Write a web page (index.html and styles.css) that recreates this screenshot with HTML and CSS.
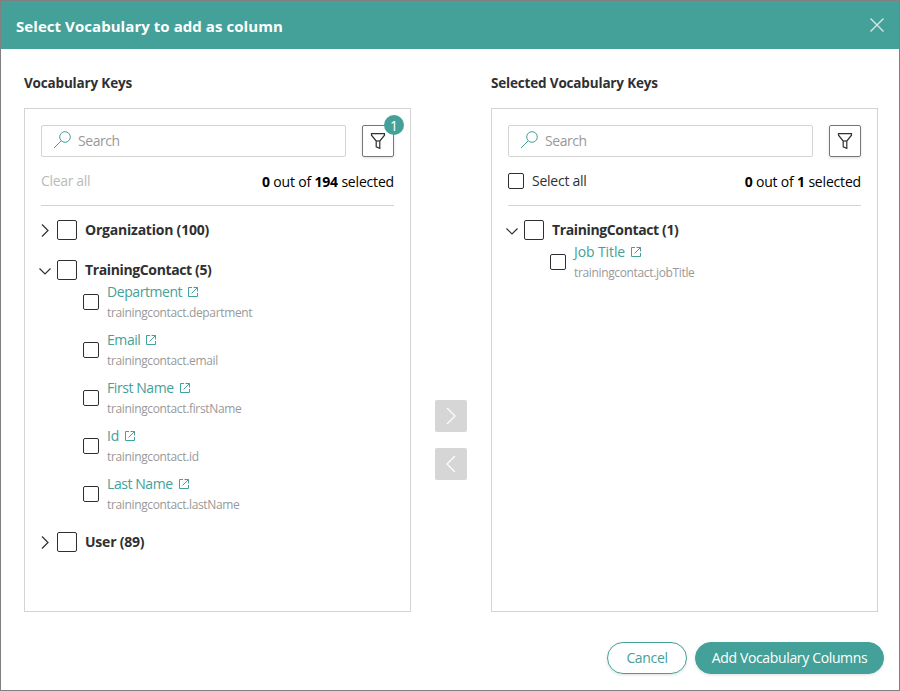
FILE: index.html
```html
<!DOCTYPE html>
<html lang="en">
<head>
<meta charset="utf-8">
<title>Select Vocabulary</title>
<link rel="stylesheet" href="styles.css">
</head>
<body>
<svg class="defs" width="0" height="0">
  <symbol id="search" viewBox="0 0 18 18"><circle cx="12" cy="6" r="5.3"/><path d="M8.200 9.800 1 17"/></symbol>
  <symbol id="filter" viewBox="0 0 16 18"><path d="M1.5 1.7h13v1.500L9.800 9v7.300l-3.600-1.500V9L1.500 3.200z"/><path d="M6.200 9h3.600"/></symbol>
  <symbol id="right" viewBox="0 0 8 14"><path d="M1 1.500l6 6-6 6"/></symbol>
  <symbol id="down" viewBox="0 0 14 8"><path d="M1.500 1.500l5.500 5.500 5.500-5.500"/></symbol>
  <symbol id="open" viewBox="0 0 12 12"><path d="M5 1.500H1.500v9h9V7M6.500 1.500h4v4M10.500 1.500 4.500 7.500"/></symbol>
</svg>
<div class="dialog">
  <header class="header">
    <h1 class="title">Select Vocabulary to add as column</h1>
    <svg class="close" viewBox="0 0 14 14"><path d="M.5.5l13 13M13.500.5l-13 13"/></svg>
  </header>
  <main class="content">
    <section class="side">
      <h2 class="side-title">Vocabulary Keys</h2>
      <div class="panel">
        <div class="tools">
          <div class="search"><svg class="search-icon"><use href="#search"/></svg><span>Search</span></div>
          <div class="filter"><svg class="filter-icon"><use href="#filter"/></svg><span class="badge">1</span></div>
        </div>
        <div class="summary"><span class="clear">Clear all</span><span class="count"><b>0</b> out of <b>194</b> selected</span></div>
        <div class="tree">
          <div class="group"><svg class="chev"><use href="#right"/></svg><i class="box large"></i><b>Organization (100)</b></div>
          <div class="group open-group"><svg class="chev wide"><use href="#down"/></svg><i class="box large"></i><b>TrainingContact (5)</b></div>
          <div class="items">
            <div class="item"><i class="box"></i><div><a class="name">Department<svg class="open"><use href="#open"/></svg></a><span class="key">trainingcontact.department</span></div></div>
            <div class="item"><i class="box"></i><div><a class="name">Email<svg class="open"><use href="#open"/></svg></a><span class="key">trainingcontact.email</span></div></div>
            <div class="item"><i class="box"></i><div><a class="name">First Name<svg class="open"><use href="#open"/></svg></a><span class="key">trainingcontact.firstName</span></div></div>
            <div class="item"><i class="box"></i><div><a class="name short">Id<svg class="open"><use href="#open"/></svg></a><span class="key">trainingcontact.id</span></div></div>
            <div class="item"><i class="box"></i><div><a class="name">Last Name<svg class="open"><use href="#open"/></svg></a><span class="key">trainingcontact.lastName</span></div></div>
          </div>
          <div class="group"><svg class="chev"><use href="#right"/></svg><i class="box large"></i><b>User (89)</b></div>
        </div>
      </div>
    </section>
    <div class="moves">
      <div class="move"><svg class="arrow" viewBox="0 0 10 18"><path d="M1 1l8 8-8 8"/></svg></div>
      <div class="move"><svg class="arrow" viewBox="0 0 10 18"><path d="M9 1 1 9l8 8"/></svg></div>
    </div>
    <section class="side">
      <h2 class="side-title">Selected Vocabulary Keys</h2>
      <div class="panel">
        <div class="tools">
          <div class="search"><svg class="search-icon"><use href="#search"/></svg><span>Search</span></div>
          <div class="filter"><svg class="filter-icon"><use href="#filter"/></svg></div>
        </div>
        <div class="summary"><span class="all"><i class="box"></i>Select all</span><span class="count"><b>0</b> out of <b>1</b> selected</span></div>
        <div class="tree">
          <div class="group open-group"><svg class="chev wide"><use href="#down"/></svg><i class="box large"></i><b>TrainingContact (1)</b></div>
          <div class="items">
            <div class="item"><i class="box"></i><div><a class="name short">Job Title<svg class="open"><use href="#open"/></svg></a><span class="key">trainingcontact.jobTitle</span></div></div>
          </div>
        </div>
      </div>
    </section>
  </main>
  <footer class="footer">
    <div class="button">Cancel</div>
    <div class="button primary">Add Vocabulary Columns</div>
  </footer>
</div>
</body>
</html>
```
FILE: styles.css
```css
* { box-sizing: border-box; }
body { margin: 0; font: 14px/20px "Open Sans", "Noto Sans", sans-serif; color: #2f3032; }
svg { display: block; fill: none; stroke: currentColor; flex: none; }
.defs { position: absolute; }
.dialog { width: 900px; height: 691px; border: 1px solid #808080; background: #fff; white-space: nowrap; display: flex; flex-direction: column; }
.header { height: 48px; flex: none; background: #44a199; color: #fff; display: flex; align-items: center; justify-content: space-between; padding: 2px 15px 0; }
.title { margin: 0; font-size: 15px; font-weight: 700; letter-spacing: .06px; }
.close { width: 14px; height: 14px; margin-bottom: 2px; stroke: #d3e9e7; stroke-width: 1.4; }
.content { display: flex; padding: 24px 21px 0 23px; height: 563px; }
.side { width: 387px; }
.side-title { margin: 0 0 15px; font-size: 13.5px; font-weight: 700; letter-spacing: -.17px; }
.panel { height: 504px; border: 1px solid #d3d3d3; padding: 16px; }
.tools { display: flex; gap: 16px; }
.search { flex: 1; height: 32px; border: 1px solid #d3d3d3; border-radius: 2px; display: flex; align-items: center; padding-left: 11px; gap: 7px; color: #999; letter-spacing: -.45px; }
.search-icon { width: 18px; height: 18px; color: #44a199; margin-top: -2px; }
.filter { position: relative; width: 32px; height: 32px; border: 1px solid #777; border-radius: 2px; display: flex; align-items: center; justify-content: center; box-shadow: 0 1px 3px #0002; }
.filter-icon { width: 16px; height: 18px; stroke-width: 1.2; }
.badge { position: absolute; top: -11px; right: -11px; width: 20px; height: 20px; border-radius: 50%; background: #44a199; color: #fff; text-align: center; font-size: 14px; line-height: 21px; }
.summary { height: 49px; border-bottom: 1px solid #d3d3d3; display: flex; align-items: center; justify-content: space-between; }
.clear { color: #bababa; letter-spacing: -.33px; }
.all { display: flex; align-items: center; gap: 8px; letter-spacing: -.25px; }
.count { color: #000; padding-top: 2px; letter-spacing: -.18px; }
.box { width: 16px; height: 16px; border: 1px solid #2f3032; border-radius: 2px; flex: none; }
.large { width: 20px; height: 20px; }
.tree { padding-top: 4px; }
.group { height: 40px; display: flex; align-items: center; letter-spacing: -.22px; }
.open-group { letter-spacing: -.37px; }
.group b { margin-left: 8px; }
.chev { width: 8px; height: 14px; margin-right: 8px; stroke-width: 1.2; }
.wide { width: 14px; height: 8px; margin: 1px 5px 0 -3px; }
.items { margin-top: -8px; padding-left: 42px; }
.item { height: 48px; display: flex; gap: 8px; }
.item .box { margin-top: 12px; }
.name { display: flex; align-items: center; gap: 5px; color: #44a199; letter-spacing: -.43px; }
.short { letter-spacing: -.1px; }
.open { width: 12px; height: 12px; }
.key { display: block; font-size: 12px; color: #999; line-height: 22px; letter-spacing: -.35px; }
.moves { width: 80px; padding: 327px 24px 0; display: flex; flex-direction: column; gap: 16px; }
.move { width: 32px; height: 32px; border-radius: 2px; background: #d6d6d6; color: #fff; display: flex; align-items: center; justify-content: center; }
.arrow { width: 10px; height: 18px; stroke-width: 1.2; }
.footer { display: flex; justify-content: flex-end; gap: 8px; padding: 30px 15px 0; }
.button { width: 80px; height: 32px; border: 1px solid #44a199; border-radius: 16px; color: #44a199; text-align: center; line-height: 30px; letter-spacing: -.35px; box-shadow: 0 1px 3px #0002; }
.primary { width: 189px; background: #44a199; color: #fff; }
```
